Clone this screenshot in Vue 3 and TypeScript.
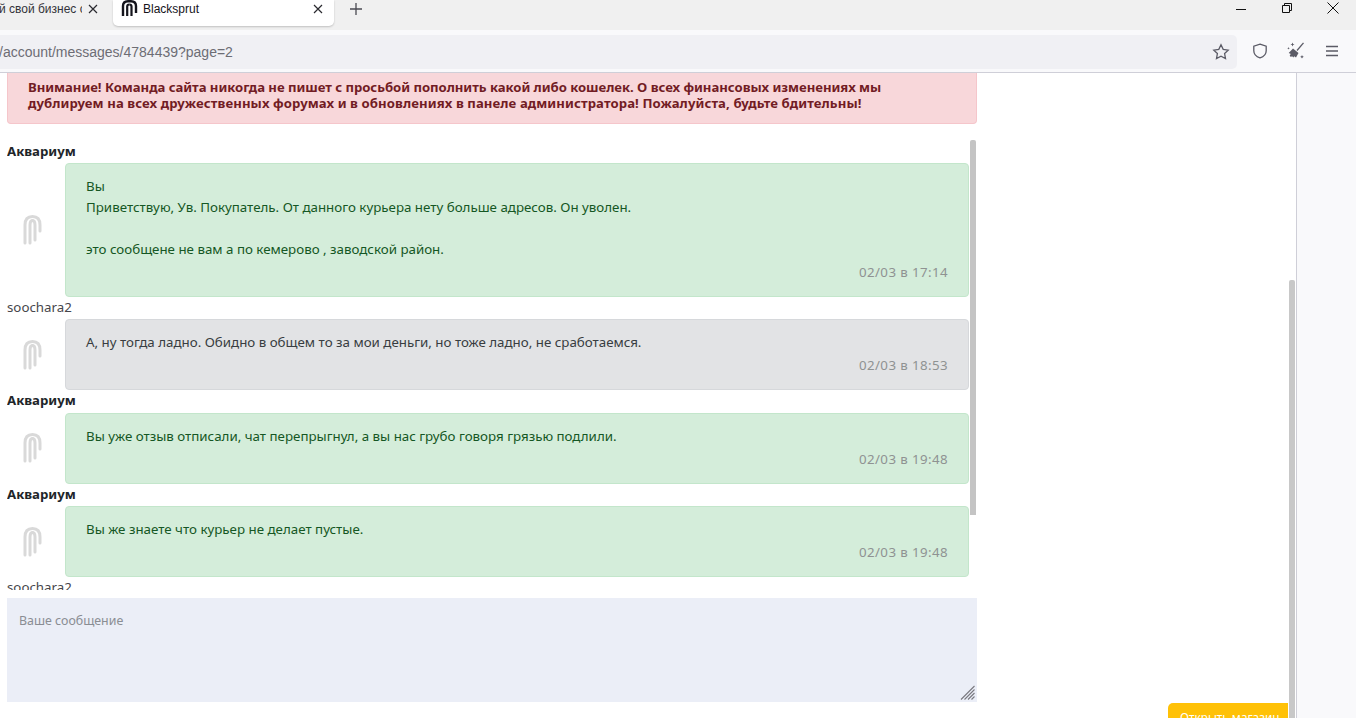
<script setup lang="ts">
interface Msg {
  author: string
  own: boolean
  lines: string[]
  time: string
  bubbleHeight: number
}

const messages: Msg[] = [
  {
    author: 'Аквариум',
    own: true,
    lines: [
      'Вы',
      'Приветствую, Ув. Покупатель. От данного курьера нету больше адресов. Он уволен.',
      '\u00a0',
      'это сообщене не вам а по кемерово , заводской район.',
    ],
    time: '02/03 в 17:14',
    bubbleHeight: 133.5,
  },
  {
    author: 'soochara2',
    own: false,
    lines: ['А, ну тогда ладно. Обидно в общем то за мои деньги, но тоже ладно, не сработаемся.'],
    time: '02/03 в 18:53',
    bubbleHeight: 71,
  },
  {
    author: 'Аквариум',
    own: true,
    lines: ['Вы уже отзыв отписали, чат перепрыгнул, а вы нас грубо говоря грязью подлили.'],
    time: '02/03 в 19:48',
    bubbleHeight: 71,
  },
  {
    author: 'Аквариум',
    own: true,
    lines: ['Вы же знаете что курьер не делает пустые.'],
    time: '02/03 в 19:48',
    bubbleHeight: 71,
  },
  { author: 'soochara2', own: false, lines: [], time: '', bubbleHeight: 0 },
]
</script>

<template>
  <div class="window">
    <header class="tabbar">
      <div class="tab-old">
        <span class="tab-old-title">й свой бизнес с</span>
        <svg class="tab-close" width="12" height="12" viewBox="0 0 12 12"><path d="M2 2l8 8M10 2l-8 8" /></svg>
      </div>
      <div class="tab-active">
        <svg class="tab-logo" width="17" height="17" viewBox="0 0 17 17">
          <path d="M2 16V6Q2 1.200 7 1.200h3Q15 1.200 15 6V13" fill="none" stroke="#14141c" stroke-width="2.400" />
          <path d="M6.200 16V6.500Q6.200 4.500 8.300 4.500" fill="none" stroke="#14141c" stroke-width="2.200" />
          <path d="M10.500 16V6.500Q10.500 4.500 8.300 4.500" fill="none" stroke="#14141c" stroke-width="2.200" />
        </svg>
        <span class="tab-title">Blacksprut</span>
        <svg class="tab-close" width="12" height="12" viewBox="0 0 12 12"><path d="M2 2l8 8M10 2l-8 8" /></svg>
      </div>
      <svg class="tab-new" width="14" height="14" viewBox="0 0 14 14"><path d="M7 1v12M1 7h12" /></svg>
      <div class="win-controls">
        <svg width="12" height="12" viewBox="0 0 12 12"><path d="M1 7.500h10" /></svg>
        <svg width="12" height="12" viewBox="0 0 12 12"><path d="M1.500 3.500h7v7h-7zM3.500 3.500v-2h7v7h-2" /></svg>
        <svg width="12" height="12" viewBox="0 0 12 12"><path d="M.5 .5l11 11M11.500 .5l-11 11" /></svg>
      </div>
    </header>
    <div class="toolbar">
      <div class="urlbar">
        <span class="url">/account/messages/4784439?page=2</span>
        <svg class="tool" width="18" height="18" viewBox="0 0 18 18"><path d="M9 1.800l2.200 4.600 5 .7-3.600 3.500.9 5L9 13.200 4.500 15.600l.9-5L1.800 7.100l5-.7z" /></svg>
      </div>
      <div class="tools">
        <svg class="tool" width="16" height="16" viewBox="0 0 16 16"><path d="M8 1.200l6.200 2v4.500c0 3.600-2.700 6-6.200 7.100-3.500-1.100-6.200-3.500-6.200-7.100V3.200z" /></svg>
        <svg class="tool broom" width="18" height="18" viewBox="0 0 18 18">
          <path d="M16.500 .8L10 8.500" />
          <path class="solid" d="M6 6.500l5.500 4.500-2.500 4.500-1.800-1.300-.8 1.300-1.300-1.300-1.400.8-1-1.700 1.200-1.200-2.200-1.100z" />
          <path class="solid" d="M5.500 .5l.6 1.400 1.400.6-1.400.6-.6 1.400-.6-1.400-1.400-.6 1.400-.6zM15 13l.6 1.200 1.200.6-1.200.6-.6 1.200-.6-1.200-1.200-.6 1.200-.6zM1.500 5l.4.9.9.4-.9.4-.4.9-.4-.9-.9-.4.9-.4z" />
        </svg>
        <svg class="tool" width="16" height="16" viewBox="0 0 16 16"><path d="M2 3.500h12M2 8h12M2 12.500h12" /></svg>
      </div>
    </div>

    <div class="viewport">
      <main class="page">
        <div class="content">
          <div class="alert">
            <span class="alert-first">Внимание! Команда сайта никогда не пишет с просьбой пополнить какой либо кошелек. О всех финансовых изменениях мы</span>
            <span class="alert-second">дублируем на всех дружественных форумах и в обновлениях в панеле администратора! Пожалуйста, будьте бдительны!</span>
          </div>
          <div class="chat">
            <div class="messages">
              <section v-for="(m, i) in messages" :key="i" class="msg">
                <div class="author" :class="{ bold: m.own }">{{ m.author }}</div>
                <div v-if="m.bubbleHeight" class="row">
                  <div class="avatar">
                    <svg width="19" height="30" viewBox="0 0 19 30">
                      <path d="M2 28V10Q2 1.500 9.500 1.500T17 10V16" />
                      <path d="M7 28V10Q7 5.500 9.500 5.500" />
                      <path d="M12 25V10Q12 5.500 9.500 5.500" />
                    </svg>
                  </div>
                  <div class="bubble" :class="m.own ? 'green' : 'grey'" :style="{ height: m.bubbleHeight + 'px' }">
                    <p v-for="(l, j) in m.lines" :key="j">{{ l }}</p>
                    <div class="time">{{ m.time }}</div>
                  </div>
                </div>
              </section>
            </div>
            <div class="chat-scroll"></div>
          </div>
          <div class="composer">
            <span class="placeholder">Ваше сообщение</span>
            <svg class="grip" width="15" height="15" viewBox="0 0 15 15">
              <path d="M1 14.500L14.500 1M4.500 14.500L14.500 4.500M8 14.500l6.500-6.500M11.500 14.500l3-3" />
            </svg>
          </div>
        </div>
        <div class="open-shop">Открыть магазин</div>
      </main>
      <div class="page-scroll"><div class="page-thumb"></div></div>
      <aside class="side"></aside>
    </div>
  </div>
</template>

<style>
html, body { margin: 0; padding: 0; overflow: hidden; background: #fff; }
</style>

<style scoped>
.window { width: 1356px; height: 718px; display: flex; flex-direction: column; overflow: hidden; font-family: "Noto Sans", "Liberation Sans", sans-serif; background: #fff; }
.tabbar { height: 30px; background: #f0f0f0; display: flex; align-items: flex-start; flex: none; font-family: "Liberation Sans", sans-serif; }
.tab-old { width: 113px; height: 17px; display: flex; align-items: center; font-size: 12px; white-space: nowrap; overflow: hidden; flex: none; }
.tab-old-title { width: 83px; overflow: hidden; margin: 0 4px 0 -1px; color: #33333a; flex: none; }
.tab-close { fill: none; stroke: #2a2a30; stroke-width: 1.2; flex: none; }
.tab-old .tab-close { margin-left: 1px; }
.tab-active { width: 221px; height: 26px; background: #fff; border-radius: 0 0 5px 5px; display: flex; align-items: center; box-shadow: 0 1px 2px rgba(0,0,0,.2); box-sizing: border-box; padding: 0 10px 9px 8px; flex: none; }
.tab-logo { flex: none; }
.tab-title { font-size: 12px; color: #15141a; margin-left: 5px; flex: 1; }
.tab-new { fill: none; stroke: #4a4a52; stroke-width: 1.3; margin: 2px 0 0 15px; flex: none; }
.win-controls { margin-left: auto; display: flex; gap: 34px; padding: 2px 0 0 2px; width: 123px; box-sizing: border-box; flex: none; }
.win-controls svg { fill: none; stroke: #111; stroke-width: 1; flex: none; }
.toolbar { height: 43px; background: #f9f9fb; border-bottom: 1px solid #cfcfd8; box-sizing: border-box; display: flex; align-items: center; flex: none; }
.urlbar { width: 1237px; height: 34px; margin-top: 1px; background: #f0f0f4; border-radius: 0 5px 5px 0; display: flex; align-items: center; justify-content: space-between; padding-right: 7px; box-sizing: border-box; flex: none; }
.url { font-family: "Liberation Sans", sans-serif; font-size: 14px; color: #6d6d74; margin-left: -1px; }
.tool { fill: none; stroke: #5b5b66; stroke-width: 1.3; flex: none; }
.tool .solid { fill: #5b5b66; stroke: none; }
.tools { display: flex; gap: 19px; margin-left: 15px; align-items: center; }
.viewport { flex: 1; display: flex; min-height: 0; }
.page { width: 1288px; flex: none; position: relative; overflow: hidden; }
.content { width: 970px; margin-left: 7px; }
.alert { height: 51px; box-sizing: border-box; background: #f8d7da; border: 1px solid #f5c6cb; border-top: 0; border-radius: 0 0 4px 4px; color: #721c24; font-size: 13.15px; font-weight: 700; line-height: 16px; padding: 6px 20px 0 20px; white-space: nowrap; }
.alert-first { display: block; letter-spacing: -.04px; }
.alert-second { display: block; letter-spacing: .09px; }
.chat { height: 450px; margin-top: 16px; padding-top: .5px; box-sizing: border-box; position: relative; overflow: hidden; }
.messages { width: 962px; }
.author { font-size: 13.3px; line-height: 20px; height: 22.5px; color: #46464b; }
.author.bold { font-size: 13.2px; font-weight: 700; color: #212529; }
.row { display: flex; }
.avatar { width: 58px; flex: none; display: flex; align-items: center; padding-left: 16px; box-sizing: border-box; }
.avatar svg { fill: none; stroke: #d9d9d9; stroke-width: 3; stroke-linecap: round; }
.bubble { flex: 1; border-radius: 4px; box-sizing: border-box; padding: 12px 20px 0; font-size: 13.33px; position: relative; }
.bubble p { margin: 0; line-height: 21px; }
.green { background: #d4edda; border: 1px solid #c3e6cb; color: #155724; }
.grey { background: #e2e3e5; border: 1px solid #d6d8db; color: #383d41; }
.time { position: absolute; right: 20px; bottom: 16px; font-size: 13.3px; letter-spacing: .4px; line-height: 16px; color: #8f9292; }
.chat-scroll { position: absolute; left: 963px; top: 0; width: 6px; height: 375px; background: #c4c4c4; border-radius: 2px 2px 0 0; }
.composer { height: 104px; margin-top: 8px; background: #ebeef7; position: relative; }
.placeholder { position: absolute; left: 12px; top: 14px; font-size: 12.4px; line-height: 17px; color: #8a8d93; }
.grip { position: absolute; right: 2px; bottom: 2px; fill: none; stroke: #7a7a80; stroke-width: 1.1; }
.open-shop { position: absolute; right: 0; bottom: 0; width: 120px; height: 15px; background: #ffc107; border-radius: 5px 0 0 0; color: #fff; font-size: 11.8px; line-height: 16px; padding: 6px 0 0 12px; box-sizing: border-box; white-space: nowrap; overflow: hidden; }
.page-scroll { width: 8px; flex: none; position: relative; }
.page-thumb { position: absolute; left: 1px; top: 207px; width: 6px; bottom: 0; background: #c8c8c8; border-radius: 2px 2px 0 0; }
.side { flex: 1; background: #f9f9fb; border-left: 1px solid #cfcfd8; }
</style>
